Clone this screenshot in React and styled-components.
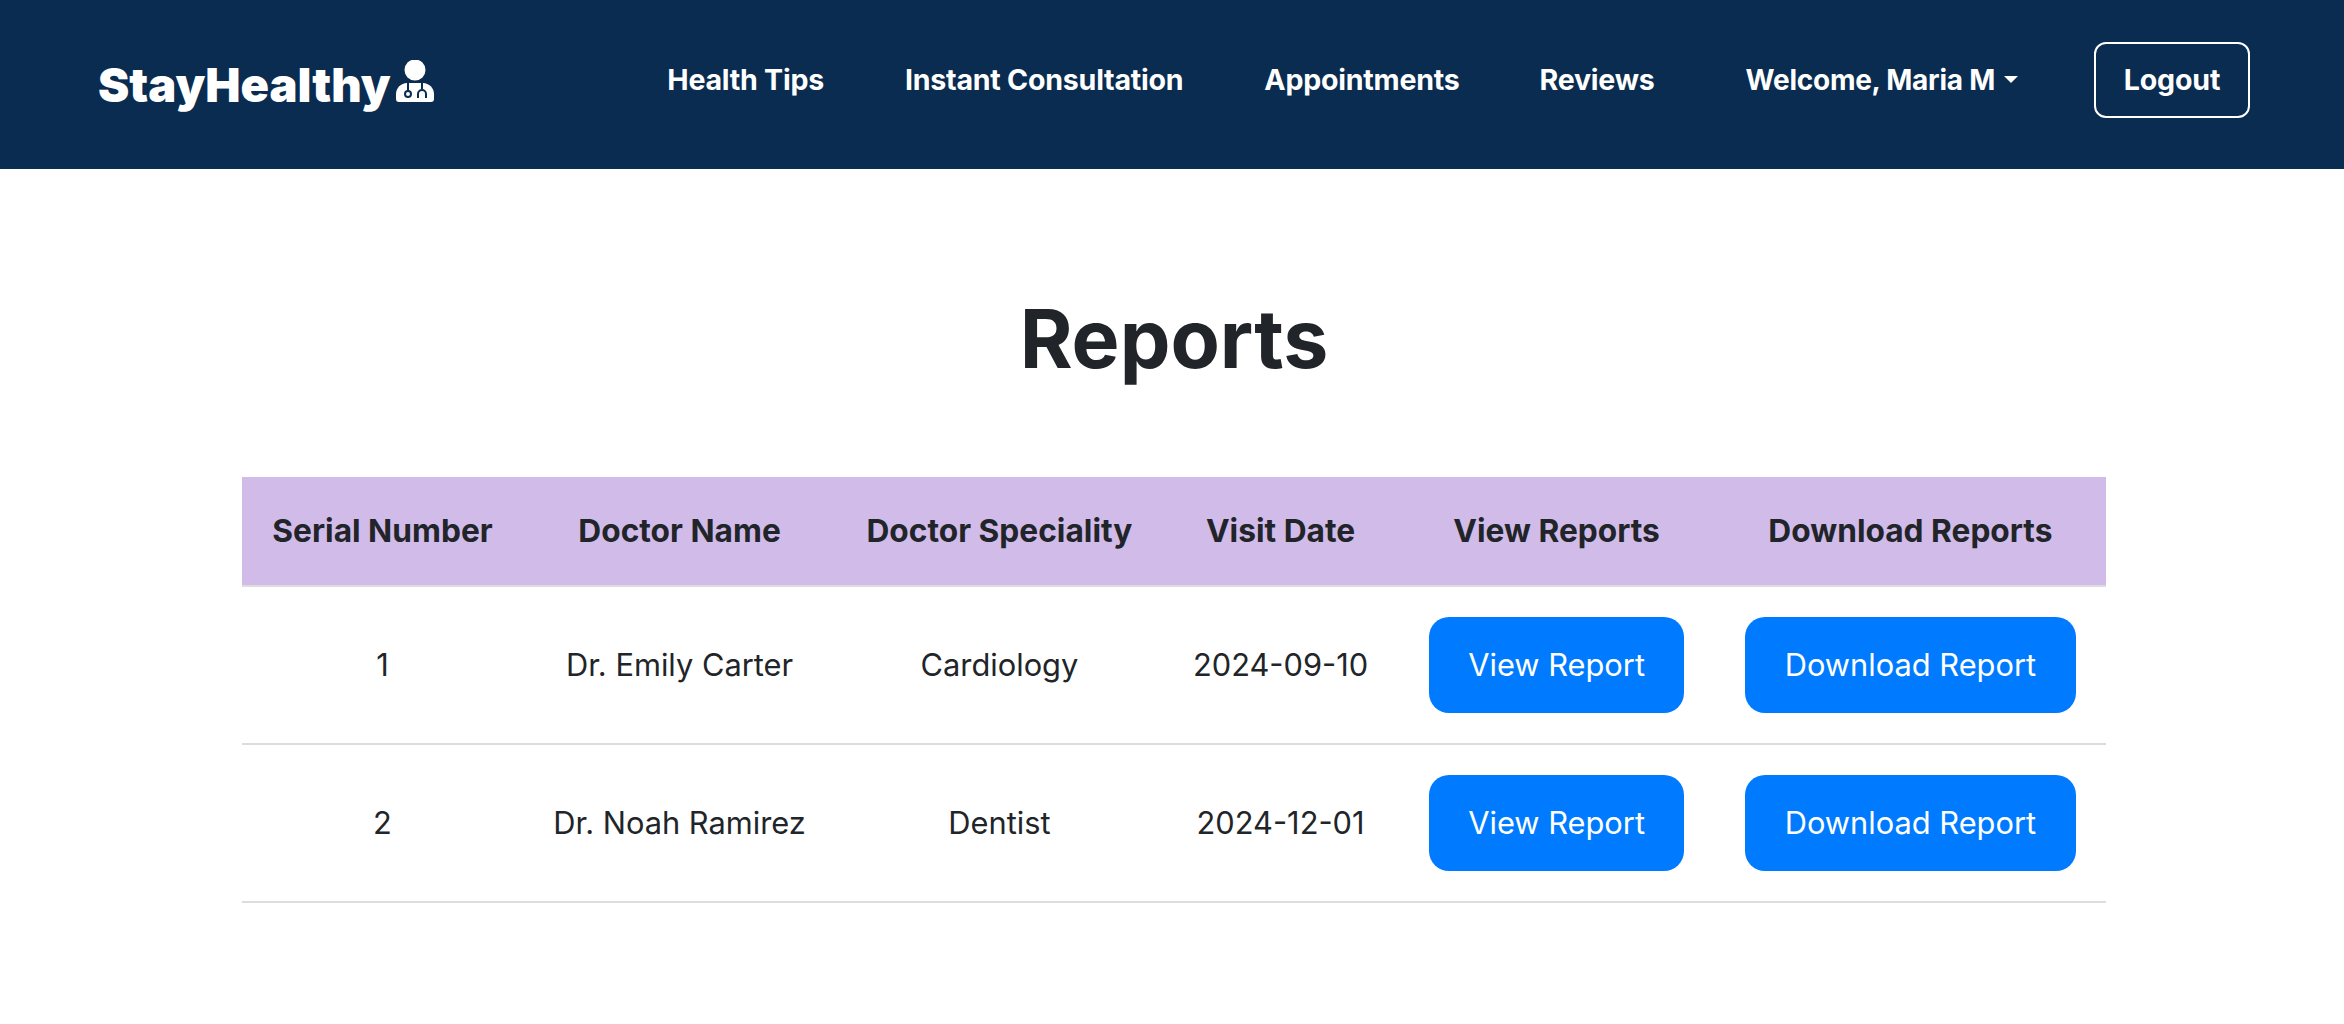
import styled, { createGlobalStyle } from 'styled-components';

const reports = [
	{ id: 1, doctor: 'Dr. Emily Carter', speciality: 'Cardiology', date: '2024-09-10' },
	{ id: 2, doctor: 'Dr. Noah Ramirez', speciality: 'Dentist', date: '2024-12-01' },
];

function App() {
	return (
		<>
			<GlobalStyle />
			<Navbar>
				<Brand href='#'>
					StayHealthy
					<DoctorIcon viewBox='0 0 38 42'>
						<circle cx='19' cy='10' r='10.5' fill='#fff' />
						<path
							d='M11 23h16c6 0 11 5 11 11v5c0 2-1 3-3 3H3c-2 0-3-1-3-3v-5c0-6 5-11 11-11z'
							fill='#fff'
						/>
						<g fill='none' stroke='#0a2c50' strokeWidth='2'>
							<path d='M12 23v8' />
							<circle cx='12' cy='34' r='3' />
							<path d='M26 23v6' />
							<path d='M22 38v-4a4 4 0 0 1 8 0v4' />
						</g>
					</DoctorIcon>
				</Brand>
				<NavLinks>
					<NavLink href='#' $gap={81}>Health Tips</NavLink>
					<NavLink href='#' $gap={81}>Instant Consultation</NavLink>
					<NavLink href='#' $gap={80}>Appointments</NavLink>
					<NavLink href='#' $gap={91}>Reviews</NavLink>
					<Welcome href='#'>Welcome, Maria M<Caret /></Welcome>
					<LogoutButton>Logout</LogoutButton>
				</NavLinks>
			</Navbar>
			<Main>
				<Title>Reports</Title>
				<Table>
					<thead>
						<tr>
							<Th>Serial Number</Th>
							<Th>Doctor Name</Th>
							<Th>Doctor Speciality</Th>
							<Th>Visit Date</Th>
							<Th>View Reports</Th>
							<Th>Download Reports</Th>
						</tr>
					</thead>
					<tbody>
						{reports.map((r) => (
							<tr key={r.id}>
								<Td>{r.id}</Td>
								<Td>{r.doctor}</Td>
								<Td>{r.speciality}</Td>
								<Td>{r.date}</Td>
								<Td><ReportButton>View Report</ReportButton></Td>
								<Td><ReportButton>Download Report</ReportButton></Td>
							</tr>
						))}
					</tbody>
				</Table>
			</Main>
		</>
	);
}

export default App;

const GlobalStyle = createGlobalStyle`
	html, body {
		margin: 0;
		background: #fff;
		font-family: Inter, 'Liberation Sans', sans-serif;
		color: #212529;
	}
	* {
		box-sizing: border-box;
	}
`;

const Navbar = styled.nav`
	display: flex;
	align-items: center;
	justify-content: space-between;
	height: 169px;
	padding: 0 94px 0 98px;
	background: #0a2c50;
`;

const Brand = styled.a`
	display: flex;
	align-items: flex-end;
	gap: 5px;
	margin-bottom: 1px;
	color: #fff;
	font-size: 47px;
	font-weight: 900;
	text-decoration: none;
`;

const DoctorIcon = styled.svg`
	width: 38px;
	height: 42px;
	margin-bottom: 11px;
`;

const NavLinks = styled.div`
	display: flex;
	align-items: center;
	margin-bottom: 10px;
`;

const NavLink = styled.a`
	margin-right: ${(p) => p.$gap}px;
	color: #fff;
	font-size: 28.6px;
	font-weight: 700;
	letter-spacing: -0.25px;
	text-decoration: none;
`;

const Welcome = styled(NavLink)`
	display: flex;
	align-items: center;
	gap: 9px;
	margin-right: 76px;
	font-size: 28px;
`;

const Caret = styled.span`
	width: 0;
	height: 0;
	border-top: 7px solid #fff;
	border-left: 7px solid transparent;
	border-right: 7px solid transparent;
`;

const LogoutButton = styled.button`
	width: 156px;
	height: 76px;
	border: 2px solid #fff;
	border-radius: 12px;
	background: transparent;
	color: #fff;
	font: 700 28.6px Inter, sans-serif;
	letter-spacing: -0.2px;
`;

const Main = styled.main`
	display: flex;
	flex-direction: column;
	align-items: center;
	padding: 0 238px 0 242px;
`;

const Title = styled.h1`
	margin: 122px 0 89px;
	font-size: 80.6px;
	font-weight: 700;
	line-height: 1.2;
`;

const Table = styled.table`
	width: 100%;
	border-collapse: collapse;
`;

const Th = styled.th`
	height: 109px;
	padding: 0 30px;
	background: #d1bbe9;
	border-bottom: 2px solid #ddd;
	font-size: 31.7px;
	font-weight: 700;
	text-align: center;
	white-space: nowrap;
`;

const Td = styled.td`
	height: 158px;
	padding: 0 30px;
	border-bottom: 2px solid #ddd;
	font-size: 30.8px;
	text-align: center;
	white-space: nowrap;
`;

const ReportButton = styled.button`
	height: 96px;
	padding: 0 39.5px;
	border: none;
	border-radius: 20px;
	background: #007bff;
	color: #fff;
	font: 400 30.8px Inter, sans-serif;
`;
